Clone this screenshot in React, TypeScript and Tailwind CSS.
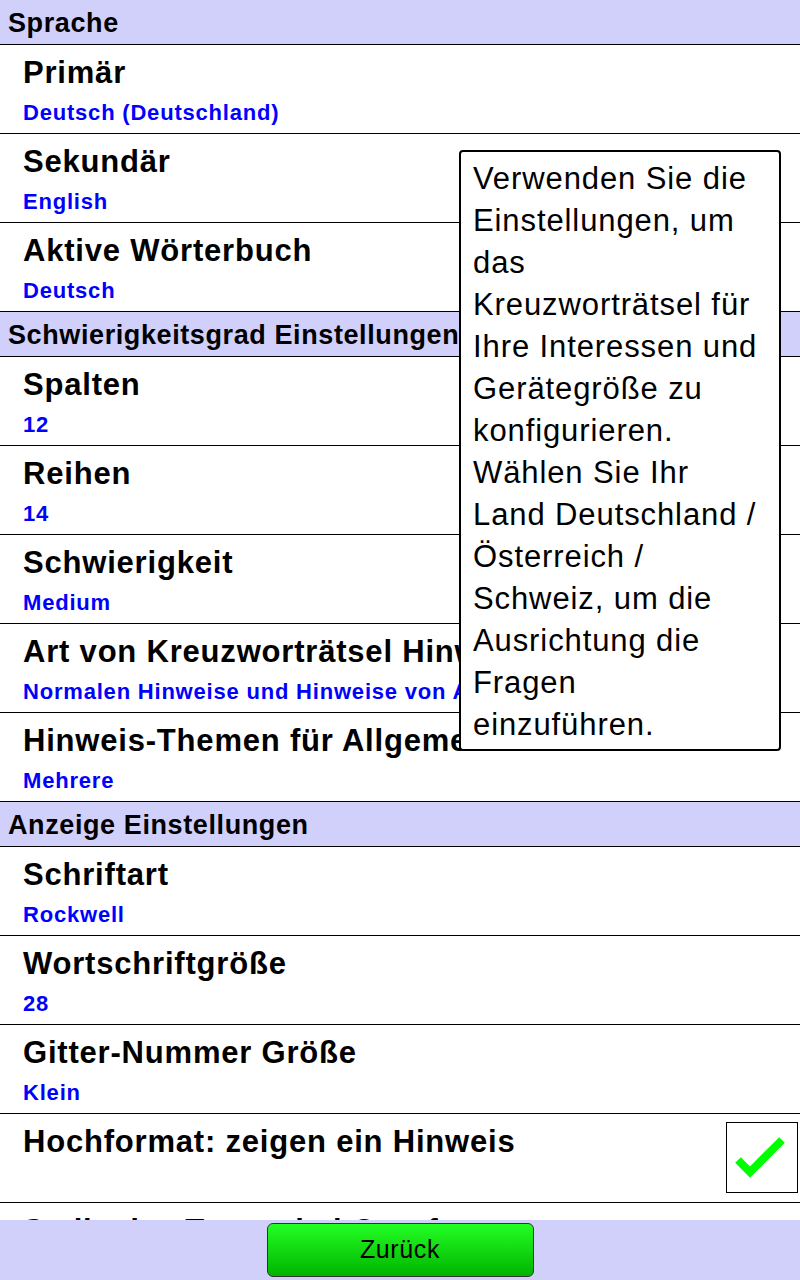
import React from "react";

type Row = { title: string; value?: string; checked?: boolean };
type Section = { name: string; rows: Row[] };

const sections: Section[] = [
  {
    name: "Sprache",
    rows: [
      { title: "Primär", value: "Deutsch (Deutschland)" },
      { title: "Sekundär", value: "English" },
      { title: "Aktive Wörterbuch", value: "Deutsch" },
    ],
  },
  {
    name: "Schwierigkeitsgrad Einstellungen",
    rows: [
      { title: "Spalten", value: "12" },
      { title: "Reihen", value: "14" },
      { title: "Schwierigkeit", value: "Medium" },
      { title: "Art von Kreuzworträtsel Hinweise", value: "Normalen Hinweise und Hinweise von Allgemeinwissen" },
      { title: "Hinweis-Themen für Allgemeinwissen", value: "Mehrere" },
    ],
  },
  {
    name: "Anzeige Einstellungen",
    rows: [
      { title: "Schriftart", value: "Rockwell" },
      { title: "Wortschriftgröße", value: "28" },
      { title: "Gitter-Nummer Größe", value: "Klein" },
      { title: "Hochformat: zeigen ein Hinweis", checked: true },
      { title: "Stelle des Textes bei Querformat" },
    ],
  },
];

const helpLines = [
  "Verwenden Sie die",
  "Einstellungen, um",
  "das",
  "Kreuzworträtsel für",
  "Ihre Interessen und",
  "Gerätegröße zu",
  "konfigurieren.",
  "Wählen Sie Ihr",
  "Land Deutschland /",
  "Österreich /",
  "Schweiz, um die",
  "Ausrichtung die",
  "Fragen",
  "einzuführen.",
];

function CheckBox() {
  return (
    <div className="w-[72px] h-[71px] mt-[8px] mr-[2px] border border-black bg-white flex items-center justify-center shrink-0">
      <svg width="60" height="60" viewBox="0 0 60 60">
        <polyline
          points="6,32 18,44 50,12"
          fill="none"
          stroke="#00ff00"
          strokeWidth="8"
          strokeLinejoin="miter"
        />
      </svg>
    </div>
  );
}

function SettingRow({ row }: { row: Row }) {
  return (
    <div className="h-[89px] border-b border-black bg-white flex items-start pl-[23px] overflow-hidden">
      <div className="flex-1 min-w-0 flex flex-col">
        <div className="pt-[11px] text-[31px] leading-[34px] font-bold tracking-[0.8px] text-black whitespace-nowrap">
          {row.title}
        </div>
        {row.value && (
          <div className="mt-[10px] text-[22px] leading-[26px] font-bold tracking-[0.8px] text-[#0000ff] whitespace-nowrap">
            {row.value}
          </div>
        )}
      </div>
      {row.checked && <CheckBox />}
    </div>
  );
}

export default function App() {
  return (
    <div
      className="relative h-[1280px] w-[800px] flex flex-col bg-white overflow-hidden"
      style={{ fontFamily: '"Liberation Sans", Arial, sans-serif' }}
    >
      <div className="flex-1 overflow-hidden">
        {sections.map((s) => (
          <div key={s.name}>
            <div className="h-[45px] border-b border-black bg-[#d0d0fa] px-2 pt-[2px] text-[27px] leading-[42px] font-bold tracking-[0.6px] text-black whitespace-nowrap">
              {s.name}
            </div>
            {s.rows.map((r) => (
              <SettingRow key={r.title} row={r} />
            ))}
          </div>
        ))}
      </div>

      <div className="h-[60px] bg-[#d0d0fa] flex justify-center pt-[3px]">
        <button className="w-[267px] h-[54px] rounded-[6px] border border-[#333] bg-gradient-to-b from-[#22ff22] to-[#00b400] text-[25px] tracking-[0.6px] text-black">
          Zurück
        </button>
      </div>

      <div className="absolute left-[459px] top-[150px] w-[322px] h-[601px] border-2 border-black rounded-[4px] bg-white pl-[12px] pt-[6px]">
        {helpLines.map((l) => (
          <div key={l} className="text-[31px] leading-[42px] tracking-[0.9px] text-black whitespace-nowrap">
            {l}
          </div>
        ))}
      </div>
    </div>
  );
}
